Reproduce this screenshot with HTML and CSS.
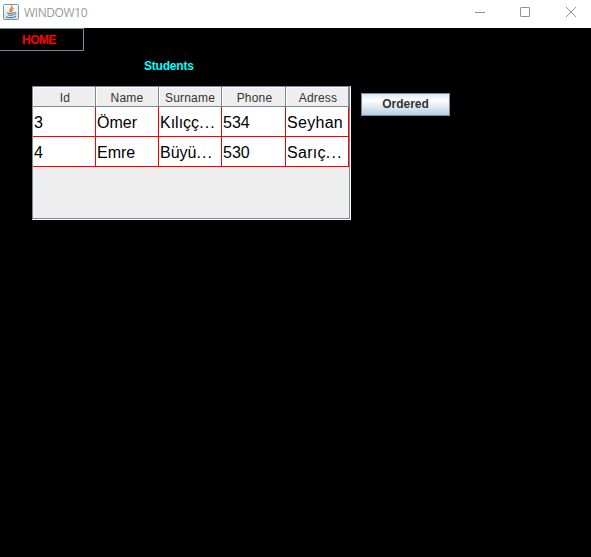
FILE: index.html
```
<!DOCTYPE html>
<html lang="en">
<head>
<meta charset="utf-8">
<title>WINDOW10</title>
<link rel="stylesheet" href="styles.css">
</head>
<body>
<header class="titlebar">
  <svg class="app-icon" width="16" height="16" viewBox="0 0 16 16">
    <defs><linearGradient id="tile" x2="0" y2="1"><stop stop-color="#fff"/><stop offset="1" stop-color="#d0deea"/></linearGradient></defs>
    <rect x=".5" y=".5" width="15" height="15" rx="1" fill="url(#tile)" stroke="#7791a4"/>
    <g fill="none" stroke-linecap="round">
      <path d="M8.8 2C9.8 4 5.8 4.7 7.3 7.7M10.2 4.4C8 5.5 8.4 6 8.6 7.4" stroke="#e8831d" stroke-width="1.4"/>
      <path d="M4.5 8.9c1.5.8 4.8.7 6.2 0M5.2 10.9c1.4.6 3.7.6 4.9 0M11.5 8.6c2-.3 1.8 1.8-.2 2.4M3.3 13c2.2.9 6.9.8 9.4-.3" stroke="#456a88" stroke-width="1"/>
    </g>
  </svg>
  <span class="title">WINDOW10</span>
  <svg class="controls" width="103" height="12" viewBox="0 0 103 12" fill="none" stroke="#929292">
    <path d="M0 6.5h10"/>
    <rect x="45.5" y="1.5" width="9" height="9" rx=".5"/>
    <path d="M91 1l10 10M101 1L91 11"/>
  </svg>
</header>
<nav class="menu"><span class="home">HOME</span></nav>
<main class="content">
  <section class="students">
    <h1 class="heading"><span>Students</span></h1>
    <div class="scroll-pane">
      <div class="row head"><span>Id</span><span>Name</span><span>Surname</span><span>Phone</span><span>Adress</span></div>
      <div class="row"><span>3</span><span>Ömer</span><span>Kılıçç<i>...</i></span><span>534</span><span class="wide">Seyhan</span></div>
      <div class="row"><span>4</span><span>Emre</span><span>Büyü<i>...</i></span><span>530</span><span class="wide">Sarıç<i>...</i></span></div>
    </div>
  </section>
  <button class="ordered">Ordered</button>
</main>
</body>
</html>
```
FILE: styles.css
```
* { box-sizing: border-box; }
body {
  margin: 0;
  height: 557px;
  overflow: hidden;
  background: #000;
  font-family: "Liberation Sans", Arial, sans-serif;
}
.titlebar {
  display: flex;
  align-items: flex-start;
  height: 28px;
  padding: 4px 13px 0 3px;
  background: #fff;
}
.title {
  margin-left: 5px;
  font: 12px/17px "Open Sans", sans-serif;
  letter-spacing: -0.4px;
  color: #999;
}
.controls { margin: 2px 0 0 auto; }
.menu {
  width: 84px;
  height: 23px;
  padding-left: 22px;
  border: 1px solid #7a8a99;
  border-left: 0;
  font: bold 12px/22px "Liberation Sans", sans-serif;
  letter-spacing: -0.5px;
  color: #f00;
}
.content {
  display: flex;
  align-items: flex-start;
  gap: 10px;
  padding-left: 32px;
}
.students { width: 319px; }
.heading {
  height: 35px;
  margin: 0;
  padding: 7px 0 0 112px;
  font-size: 12px;
  line-height: 16px;
  letter-spacing: -0.2px;
  color: #0ff;
}
.scroll-pane {
  height: 134px;
  border: 1px solid #7a8a99;
  border-right: 1px solid #fff;
  border-bottom: 1px solid #fff;
  background: #eee;
  box-shadow: inset -1px -1px #7a8a99;
}
.row {
  display: grid;
  grid-template-columns: 63px 63px 63px 64px 63px;
  width: 316px;
  height: 30px;
}
.row span {
  padding-left: 1px;
  border-right: 1px solid #f00;
  border-bottom: 1px solid #f00;
  background: #fff;
  font-size: 16px;
  line-height: 31px;
  white-space: nowrap;
  overflow: hidden;
}
.row i {
  font-style: normal;
  letter-spacing: 1.1px;
}
.row .wide { letter-spacing: 0.3px; }
.row.head { height: 20px; }
.row.head span {
  padding: 0;
  border-color: #7a8a99;
  background: #eee;
  box-shadow: inset 1px 1px #fff;
  color: #333;
  font-size: 12px;
  line-height: 22px;
  letter-spacing: 0.2px;
  text-align: center;
}
.row.head span:first-child,
.row.head span:nth-child(n+4) { padding-left: 2px; }
.ordered {
  width: 89px;
  height: 23px;
  margin-top: 42px;
  padding: 0;
  border: 1px solid #7a8a99;
  background: linear-gradient(#dde8f3 0, #fff 30%, #b8cfe5 100%);
  font: bold 12px/21px "Liberation Sans", sans-serif;
  color: #333;
}
```
